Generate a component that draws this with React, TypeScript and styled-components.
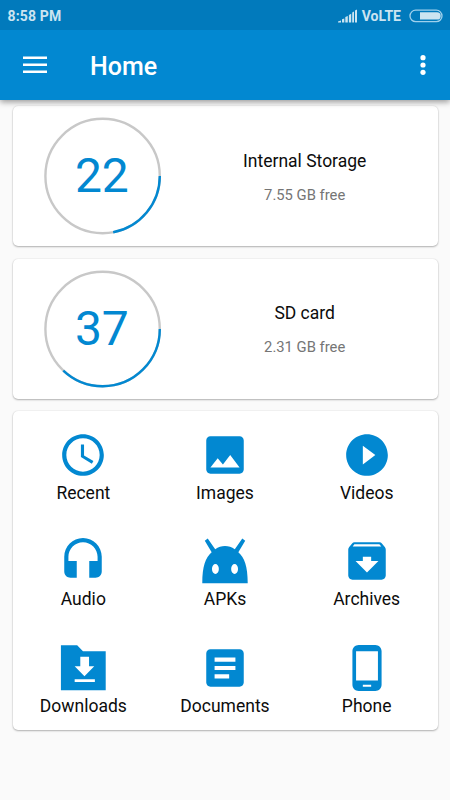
import React from "react";
import styled, { createGlobalStyle } from "styled-components";

const BLUE = "#0288d1";

const GlobalStyle = createGlobalStyle`
  * { box-sizing: border-box; }
  body {
    margin: 0;
    background: #fafafa;
    font-family: Roboto, "Liberation Sans", sans-serif;
    color: #0c0c0c;
  }
`;

const Screen = styled.div`
  width: 450px;
  height: 800px;
  display: flex;
  flex-direction: column;
  overflow: hidden;
`;

const Header = styled.header`
  flex: none;
  position: relative;
  z-index: 1;
  box-shadow: 0 2px 6px rgba(0, 0, 0, 0.4);
`;

const StatusBar = styled.div`
  height: 30px;
  padding: 1px 7px 0 7.5px;
  display: flex;
  align-items: center;
  background: #017abc;
  color: #cce4f1;
  font-size: 14px;
  font-weight: 700;
`;

const Clock = styled.span`
  flex: 1;
  letter-spacing: 0.15px;
`;

const Signal = styled.svg`
  width: 20px;
  height: 14px;
  margin-right: 4px;
`;

const Battery = styled.svg`
  width: 34px;
  height: 14px;
  margin-left: 8px;
`;

const Toolbar = styled.div`
  height: 70px;
  padding: 0 2.5px 0 10px;
  display: flex;
  align-items: center;
  background: ${BLUE};
  color: #fff;
`;

const IconButton = styled.button`
  width: 50px;
  height: 50px;
  padding: 0;
  border: 0;
  background: none;
  color: inherit;
  display: grid;
  place-items: center;
`;

const Title = styled.h1`
  flex: 1;
  margin: 4px 0 0 30px;
  font-size: 25px;
  line-height: 30px;
  font-weight: 500;
`;

const Content = styled.main`
  padding: 6.3px 12.5px 0;
  display: flex;
  flex-direction: column;
  gap: 12.5px;
`;

const Card = styled.section`
  background: #fff;
  border-radius: 5px;
  box-shadow: 0 1px 2px rgba(0, 0, 0, 0.28), 0 0 1.5px rgba(0, 0, 0, 0.14);
`;

const StorageRow = styled(Card)`
  height: 140px;
  display: flex;
  align-items: center;
`;

const Gauge = styled.div`
  width: 118px;
  height: 118px;
  margin-left: 31px;
  display: grid;
  place-items: center;
  > * { grid-area: 1 / 1; }
`;

const Percent = styled.span`
  color: ${BLUE};
  font-size: 48px;
  line-height: 56px;
  letter-spacing: -0.2px;
  margin-right: 1.4px;
`;

const StorageInfo = styled.div`
  width: 265px;
  margin-left: 10.7px;
  text-align: center;
`;

const StorageName = styled.div`
  font-size: 17.5px;
  line-height: 22px;
  margin-top: 1px;
`;

const StorageFree = styled.div`
  font-size: 14.8px;
  line-height: 18px;
  margin-top: 14px;
  color: #757575;
`;

const Categories = styled(Card)`
  height: 318.5px;
  padding-top: 18.7px;
  display: grid;
  grid-template-columns: repeat(3, 1fr);
  grid-auto-rows: 106.5px;
`;

const Category = styled.div`
  display: flex;
  flex-direction: column;
  align-items: center;
`;

const CategoryIcon = styled.svg`
  width: 50px;
  height: 50px;
  flex: none;
  fill: ${BLUE};
`;

const CategoryLabel = styled.span`
  font-size: 17.5px;
  line-height: 22px;
  margin-top: 2px;
`;

const RADIUS = 57.2;
const LENGTH = 2 * Math.PI * RADIUS;

function Storage({ name, free, used }: { name: string; free: string; used: number }) {
  return (
    <StorageRow>
      <Gauge>
        <svg width="118" height="118" viewBox="0 0 118 118" fill="none" strokeWidth="2.4">
          <circle cx="58.6" cy="59" r={RADIUS} stroke="#c8c8c8" />
          <circle
            cx="58.6"
            cy="59"
            r={RADIUS}
            stroke={BLUE}
            strokeDasharray={`${(LENGTH * used) / 100} ${LENGTH}`}
          />
        </svg>
        <Percent>{used}</Percent>
      </Gauge>
      <StorageInfo>
        <StorageName>{name}</StorageName>
        <StorageFree>{free}</StorageFree>
      </StorageInfo>
    </StorageRow>
  );
}

const categories: { label: string; icon: React.ReactNode }[] = [
  {
    label: "Recent",
    icon: (
      <path d="M11.99 2C6.47 2 2 6.48 2 12s4.47 10 9.99 10C17.52 22 22 17.52 22 12S17.52 2 11.99 2zM12 20c-4.42 0-8-3.58-8-8s3.58-8 8-8 8 3.58 8 8-3.58 8-8 8zm.5-13H11v6l5.25 3.15.75-1.23-4.5-2.67z" />
    ),
  },
  {
    label: "Images",
    icon: (
      <path d="M21 19V5c0-1.1-.9-2-2-2H5c-1.1 0-2 .9-2 2v14c0 1.1.9 2 2 2h14c1.1 0 2-.9 2-2zM8.500 13.500l2.500 3.010L14.500 12l4.500 6H5l3.500-4.500z" />
    ),
  },
  {
    label: "Videos",
    icon: (
      <path d="M12 2C6.480 2 2 6.480 2 12s4.480 10 10 10 10-4.480 10-10S17.520 2 12 2zm-2 14.500v-9l6 4.500-6 4.500z" />
    ),
  },
  {
    label: "Audio",
    icon: (
      <path d="M12 1c-4.970 0-9 4.030-9 9v7c0 1.660 1.340 3 3 3h3v-8H5v-2c0-3.870 3.130-7 7-7s7 3.130 7 7v2h-4v8h3c1.660 0 3-1.340 3-3v-7c0-4.970-4.030-9-9-9z" />
    ),
  },
  {
    label: "APKs",
    icon: (
      <path
        fillRule="evenodd"
        d="M1.100 22.700C1.100 14.500 2.600 10.400 5.600 7.800L2.300 2.300L3.700 1.200L7.300 6.300C10.200 4.300 13.800 4.300 16.700 6.300L20.300 1.200L21.700 2.300L18.400 7.800C21.400 10.400 22.900 14.500 22.900 22.700ZM7.400 13.400a1.650 2.400 0 1 0 0 4.800a1.650 2.400 0 1 0 0-4.800ZM16.600 13.400a1.650 2.400 0 1 0 0 4.800a1.650 2.400 0 1 0 0-4.800Z"
      />
    ),
  },
  {
    label: "Archives",
    icon: (
      <path
        fillRule="evenodd"
        d="M20.540 5.230l-1.390-1.680C18.880 3.210 18.470 3 18 3H6c-.47 0-.88.21-1.160.55L3.460 5.230C3.170 5.570 3 6.020 3 6.500V19c0 1.100.9 2 2 2h14c1.100 0 2-.9 2-2V6.500c0-.48-.17-.93-.46-1.270zM12 17.500L6.500 12H10v-2h4v2h3.500L12 17.500zM5.120 5l.81-1h12l.94 1H5.120z"
      />
    ),
  },
  {
    label: "Downloads",
    icon: (
      <path
        fillRule="evenodd"
        d="M1.400 1.100H9.200L12 3.900H22.900V22.700H1.400ZM10.700 6.600V11.200H8L12.700 16L17.400 11.200H14.900V6.600ZM8 17.400V18.700H17.700V17.400Z"
      />
    ),
  },
  {
    label: "Documents",
    icon: (
      <path d="M19 3H5c-1.100 0-2 .9-2 2v14c0 1.100.9 2 2 2h14c1.100 0 2-.9 2-2V5c0-1.100-.9-2-2-2zm-5 14H7v-2h7v2zm3-4H7v-2h10v2zm0-4H7V7h10v2z" />
    ),
  },
  {
    label: "Phone",
    icon: (
      <path d="M16 1H8C6.340 1 5 2.340 5 4v16c0 1.660 1.340 3 3 3h8c1.660 0 3-1.340 3-3V4c0-1.660-1.340-3-3-3zm-2 20h-4v-1h4v1zm3.250-3H6.750V4h10.500v14z" />
    ),
  },
];

export default function App() {
  return (
    <Screen>
      <GlobalStyle />
      <Header>
        <StatusBar>
          <Clock>8:58 PM</Clock>
          <Signal viewBox="0 0 20 14" fill="#cce4f1">
            <path d="M0 13.500V12.500L3 11.500V13.500ZM4 13.500V10.200L6.300 9.500V13.500ZM7.300 13.500V8L9.800 7V13.500ZM10.900 13.500V6L13.200 4.700V13.500ZM14.200 13.500V3.500L16 2.500V13.500ZM17 13.500V1.500L19 .5V13.500Z" />
          </Signal>
          <span>VoLTE</span>
          <Battery viewBox="0 0 34 14">
            <rect x="1" y="1.200" width="32" height="11.400" rx="5.700" fill="none" stroke="#9fd0ec" strokeWidth="1.300" />
            <path d="M11 3.200H28a3.700 3.700 0 0 1 0 7.400H11Z" fill="#cce4f1" />
          </Battery>
        </StatusBar>
        <Toolbar>
          <IconButton aria-label="Menu">
            <svg width="24" height="18" viewBox="0 0 24 18" fill="#fff">
              <path d="M0 .5H24V3H0ZM0 7.500H24V10H0ZM0 14.500H24V17H0Z" />
            </svg>
          </IconButton>
          <Title>Home</Title>
          <IconButton aria-label="More options">
            <svg width="6" height="20" viewBox="0 0 6 20" fill="#fff">
              <circle cx="3" cy="2.700" r="2.600" />
              <circle cx="3" cy="10" r="2.600" />
              <circle cx="3" cy="17.300" r="2.600" />
            </svg>
          </IconButton>
        </Toolbar>
      </Header>
      <Content>
        <Storage name="Internal Storage" free="7.55 GB free" used={22} />
        <Storage name="SD card" free="2.31 GB free" used={37} />
        <Categories>
          {categories.map(({ label, icon }) => (
            <Category key={label}>
              <CategoryIcon viewBox="0 0 24 24">{icon}</CategoryIcon>
              <CategoryLabel>{label}</CategoryLabel>
            </Category>
          ))}
        </Categories>
      </Content>
    </Screen>
  );
}
